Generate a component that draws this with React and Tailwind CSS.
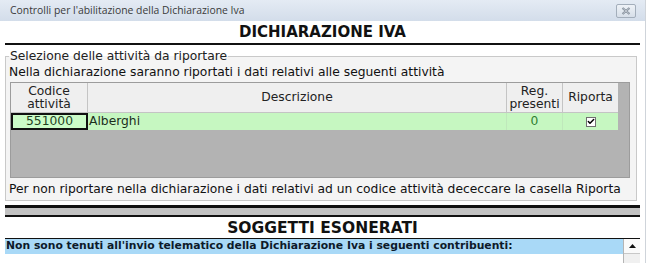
import { Check } from "lucide-react";

// ----------------------------------------------------------------------

const attivita = [{ codice: "551000", descrizione: "Alberghi", reg: "0", riporta: true }];

function TitleBar() {
  return (
    <div className="flex h-[21px] items-center justify-between bg-gradient-to-b from-[#e4ebf4] to-[#d3ddea] pl-[10px] pr-[9px]">
      <span className="font-['Open_Sans',sans-serif] text-[10.4px] leading-none text-[#3a3a3a]">
        Controlli per l'abilitazione della Dichiarazione Iva
      </span>
      <div className="flex h-[14px] w-[20px] items-center justify-center rounded-[2px] border border-[#a3aebb] bg-gradient-to-b from-[#eef2f7] to-[#d7dfe9]">
        <svg width="10" height="8" viewBox="0 0 10 8">
          <path d="M1.5 1 L8.5 7 M8.5 1 L1.5 7" stroke="#7a8592" strokeWidth="2" fill="none" />
          <path d="M1.5 1 L8.5 7 M8.5 1 L1.5 7" stroke="#eef2f6" strokeWidth="0.6" fill="none" />
        </svg>
      </div>
    </div>
  );
}

function Grid() {
  return (
    <div className="mt-[3px] mr-[2px] flex h-[96px] flex-col border border-[#9c9c9c] bg-[#b3b3b3]">
      <div className="flex h-[30px] text-[12.3px] leading-[13px] text-[#222]">
        <div className="flex w-[77px] flex-col items-center justify-center border-r border-b border-[#c4c4c4] bg-[#efefef]">
          <span>Codice</span>
          <span>attività</span>
        </div>
        <div className="flex w-[419px] items-center justify-center border-r border-b border-[#c4c4c4] bg-[#efefef]">
          Descrizione
        </div>
        <div className="flex w-[56px] flex-col items-center justify-center border-r border-b border-[#c4c4c4] bg-[#efefef]">
          <span>Reg.</span>
          <span>presenti</span>
        </div>
        <div className="flex w-[55px] items-center justify-center border-b border-[#c4c4c4] bg-[#efefef]">
          Riporta
        </div>
      </div>
      {attivita.map((a) => (
        <div key={a.codice} className="flex h-[17px] text-[12.3px] leading-none">
          <div className="flex w-[77px] items-center justify-center border-2 border-[#111] bg-[#ccfcc8] text-[#1f3f1f]">
            {a.codice}
          </div>
          <div className="flex w-[419px] items-center border-r border-[#bfe8bb] bg-[#c6f7c1] pl-[1px] text-[#1c2e1c]">
            {a.descrizione}
          </div>
          <div className="flex w-[56px] items-center justify-center border-r border-[#bfe8bb] bg-[#c6f7c1] text-[#2e7d2e]">
            {a.reg}
          </div>
          <div className="flex w-[55px] items-center justify-center bg-[#c6f7c1]">
            <div className="flex h-[10px] w-[10px] items-center justify-center border border-[#6e6e6e] bg-white">
              {a.riporta && <Check size={9} strokeWidth={4.5} className="text-black" />}
            </div>
          </div>
        </div>
      ))}
    </div>
  );
}

export default function App() {
  return (
    <div className="h-[263px] w-[650px] overflow-hidden bg-white font-['DejaVu_Sans',sans-serif]">
      <div className="h-full w-[646px] border-r border-[#cfd4da]">
        <TitleBar />

        {/* Header */}
        <div className="flex h-[22px] items-center justify-center pt-[1px] text-[15px] font-bold text-[#111]">
          DICHIARAZIONE IVA
        </div>
        <div className="mx-[5px] h-[2px] bg-[#111]" />

        {/* Group box */}
        <fieldset className="mx-[5px] mt-[5px] mr-[8px] h-[151px] border border-[#c9c9c9] bg-[#f4f4f4] px-[4px]">
          <legend className="ml-[-1px] bg-transparent px-[1px] text-[12.3px] leading-[12px] text-[#222]">
            Selezione delle attività da riportare
          </legend>
          <div className="ml-[-1px] mt-[3px] text-[12.3px] leading-[14px] text-[#111]">
            Nella dichiarazione saranno riportati i dati relativi alle seguenti attività
          </div>
          <Grid />
          <div className="ml-[-1px] mt-[4px] text-[12.3px] leading-[14px] text-[#111]">
            Per non riportare nella dichiarazione i dati relativi ad un codice attività dececcare la casella Riporta
          </div>
        </fieldset>

        {/* Separator band */}
        <div className="mx-[5px] mt-[4px] h-[3px] bg-[#111]" />
        <div className="mx-[5px] h-[7px] bg-[#c2c2c2]" />
        <div className="mx-[5px] h-[2px] bg-[#111]" />

        <div className="flex h-[21px] items-center justify-center pt-[2px] text-[15.5px] font-bold text-[#111]">
          SOGGETTI ESONERATI
        </div>
        <div className="mx-[5px] h-[1px] bg-[#111]" />

        {/* Esonerati list */}
        <div className="mx-[5px] flex">
          <div className="flex h-[15px] flex-1 items-center bg-[#a9d9f7] pl-[1px] text-[10.8px] font-bold leading-none text-[#0d1a2a]">
            Non sono tenuti all'invio telematico della Dichiarazione Iva i seguenti contribuenti:
          </div>
          <div className="flex h-[30px] w-[17px] flex-col border-l border-[#b5b5b5] bg-[#f0f0f0]">
            <div className="flex h-[15px] items-center justify-center border-b border-[#c8c8c8] bg-[#fafafa]">
              <svg width="7" height="4" viewBox="0 0 7 4">
                <path d="M0 4 L3.5 0 L7 4 Z" fill="#111" />
              </svg>
            </div>
          </div>
        </div>
      </div>
    </div>
  );
}
